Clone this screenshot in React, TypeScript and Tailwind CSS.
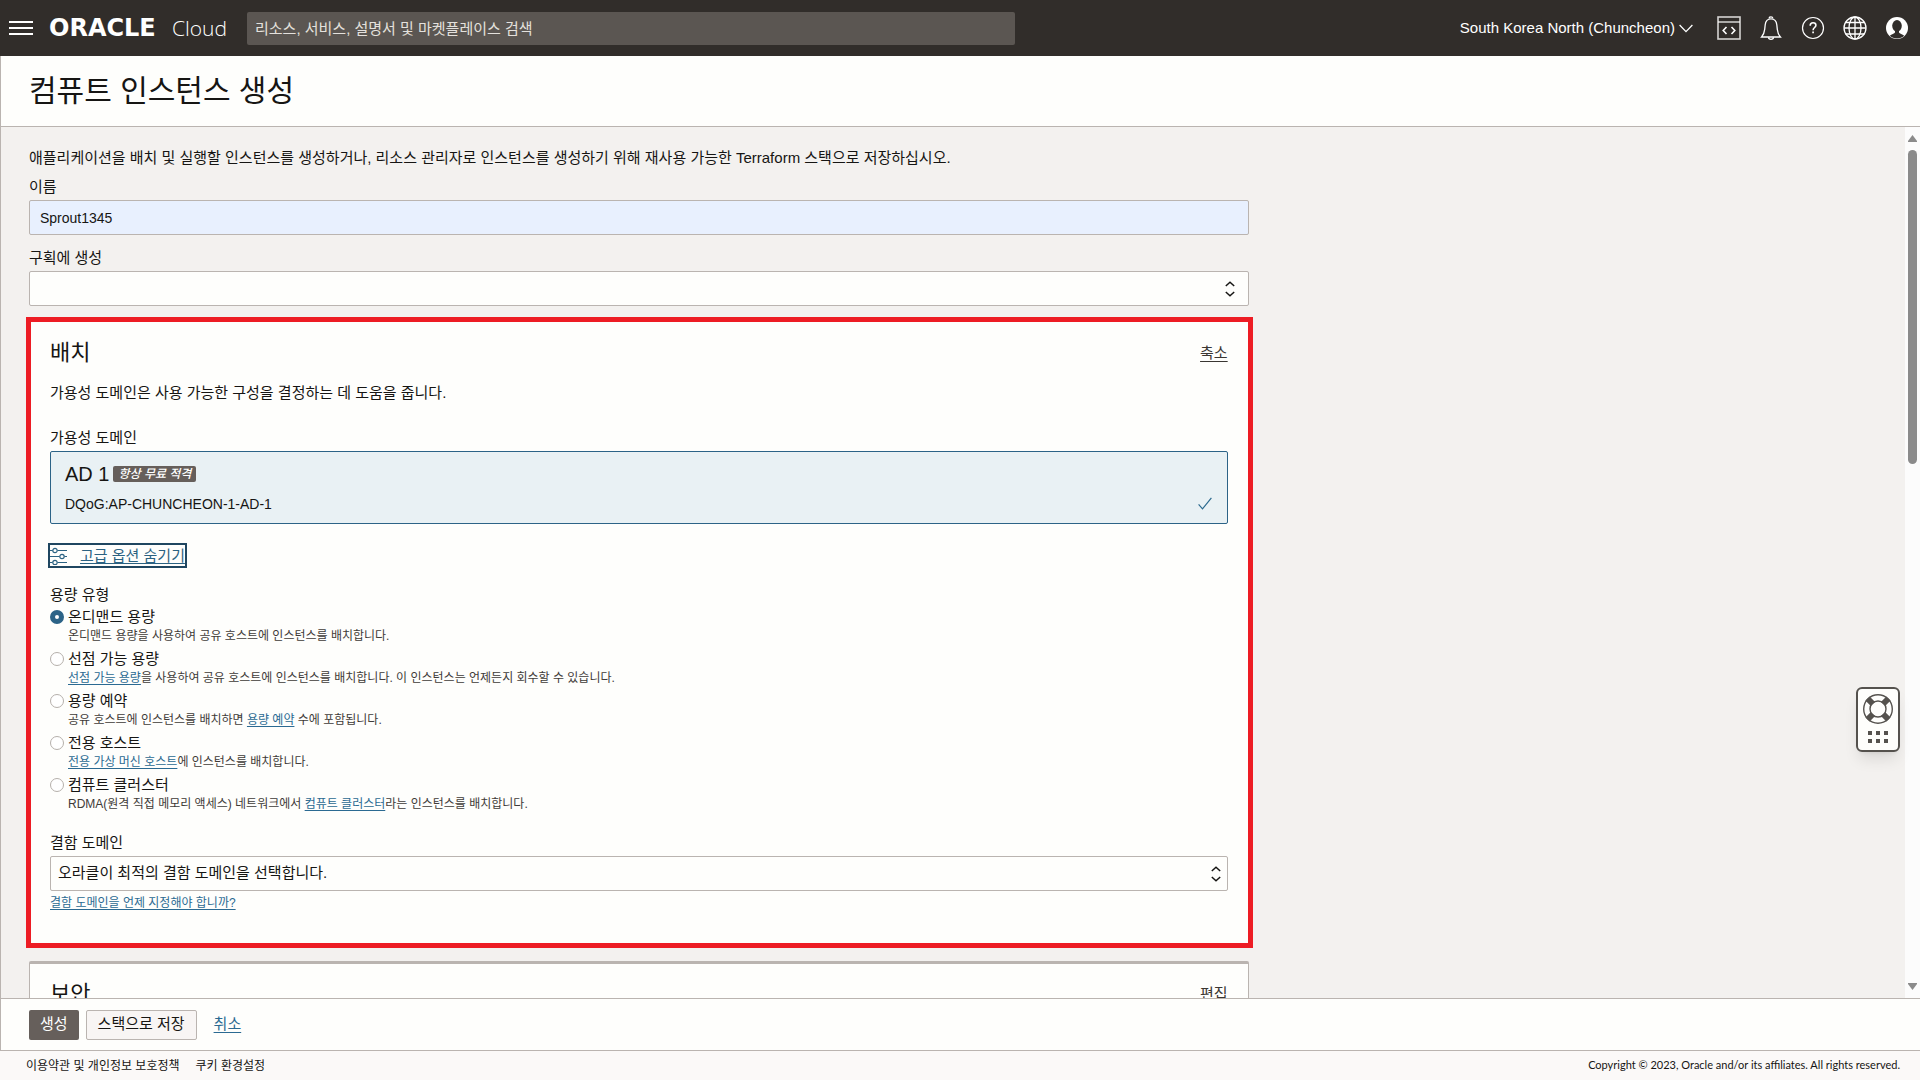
import React, { useState } from 'react'

type CapacityType = {
    id: string
    label: string
    before?: string
    link?: string
    after?: string
}

const capacityTypes: CapacityType[] = [
    { id: 'on-demand', label: '온디맨드 용량', before: '온디맨드 용량을 사용하여 공유 호스트에 인스턴스를 배치합니다.' },
    { id: 'preemptible', label: '선점 가능 용량', link: '선점 가능 용량', after: '을 사용하여 공유 호스트에 인스턴스를 배치합니다. 이 인스턴스는 언제든지 회수할 수 있습니다.' },
    { id: 'reservation', label: '용량 예약', before: '공유 호스트에 인스턴스를 배치하면 ', link: '용량 예약', after: ' 수에 포함됩니다.' },
    { id: 'dedicated', label: '전용 호스트', link: '전용 가상 머신 호스트', after: '에 인스턴스를 배치합니다.' },
    { id: 'cluster', label: '컴퓨트 클러스터', before: 'RDMA(원격 직접 메모리 액세스) 네트워크에서 ', link: '컴퓨트 클러스터', after: '라는 인스턴스를 배치합니다.' },
]

const MenuIcon = () => (
    <svg width="24" height="16" viewBox="0 0 24 16" fill="#fff">
        <path d="M0 1h24v2H0zM0 7h24v2H0zM0 13h24v2H0z" />
    </svg>
)

const CodeIcon = () => (
    <svg width="24" height="24" viewBox="0 0 24 24" fill="none" stroke="#d5d3d1" strokeWidth="1.6">
        <rect x="1" y="1" width="22" height="22" />
        <path d="M1 6h22" stroke="#fff" strokeWidth="1.2" />
        <path d="M9.5 11 6.2 14.5 9.5 18M14.5 11l3.3 3.5-3.3 3.5" stroke="#fff" />
    </svg>
)

const BellIcon = () => (
    <svg width="24" height="24" viewBox="0 0 24 24" fill="none" stroke="#fff" strokeWidth="1.3">
        <path d="M10.3 2.6V2a1.7 1.2 0 0 1 3.4 0v.6" />
        <path d="M2.6 21c2-2.2 2.7-4.4 3.1-7.6l.5-4.6C6.6 5 9 2.8 12 2.8s5.4 2.2 5.8 6l.5 4.6c.4 3.2 1.1 5.4 3.1 7.6z" />
        <path d="M9.5 21.300a2.500 2 0 0 0 5 0" />
    </svg>
)

const HelpIcon = () => (
    <svg width="24" height="24" viewBox="0 0 24 24" fill="none" stroke="#fff" strokeWidth="1.2">
        <circle cx="12" cy="12" r="10.5" />
        <path d="M9.2 9.7c0-1.8 1.2-2.9 2.9-2.900s2.800 1 2.800 2.500c0 2.200-2.800 2.300-2.800 4.900" strokeWidth="1.6" />
        <path d="M12.1 15.500v1.800" strokeWidth="1.7" />
    </svg>
)

const GlobeIcon = () => (
    <svg width="24" height="24" viewBox="0 0 24 24" fill="none" stroke="#fff" strokeWidth="1.3">
        <circle cx="12" cy="12" r="11" />
        <ellipse cx="12" cy="12" rx="6" ry="11" />
        <path d="M12 1v22M1 12h22M2.6 6.500h18.800M2.600 18h18.800" />
    </svg>
)

const UserIcon = () => (
    <svg width="24" height="24" viewBox="0 0 24 24">
        <circle cx="12" cy="12" r="11" fill="#fff" />
        <ellipse cx="12" cy="9.8" rx="4.8" ry="5.8" fill="#312d2a" />
        <path d="M10 14h4v2.500c.5 1.200 3.500 1.600 5.200 3.300C17.300 21.700 14.800 22.500 12 22.500S6.700 21.700 4.800 19.800C6.500 18.100 9.500 17.700 10 16.500z" fill="#312d2a" />
    </svg>
)

const ChevronDown = () => (
    <svg width="14" height="9" viewBox="0 0 14 9" fill="none" stroke="#fff" strokeWidth="1.3">
        <path d="m.6 1 6.400 6.600L13.400 1" />
    </svg>
)

const UpDownIcon = () => (
    <svg width="10" height="16" viewBox="0 0 10 16" fill="none" stroke="#161513" strokeWidth="1.5">
        <path d="M.8 5 5 1.300 9.200 5M.8 11 5 14.700 9.200 11" />
    </svg>
)

const CheckIcon = () => (
    <svg width="14" height="13" viewBox="0 0 14 13" fill="none" stroke="#2c6a8e" strokeWidth="1.2">
        <path d="M.6 7.400 4.500 11.800 13.400 .8" />
    </svg>
)

const SlidersIcon = () => (
    <svg width="18" height="18" viewBox="0 0 18 18" fill="none" stroke="#2b6282" strokeWidth="1.2">
        <path d="M0 3.500h2.500M7.500 3.500H17M0 9.500h9.500M14.500 9.500H17M0 15.500h2.500M7.500 15.500H17" />
        <circle cx="5" cy="3.5" r="2.2" />
        <circle cx="12" cy="9.5" r="2.2" />
        <circle cx="5" cy="15.5" r="2.2" />
    </svg>
)

const SupportIcon = () => (
    <svg width="32" height="52" viewBox="0 0 32 52" fill="none" stroke="#55524e">
        <path d="m5.500 5.500 5.500 5.500M26.500 5.500 21 11M5.500 26.500 11 21M26.500 26.500 21 21" strokeWidth="6" />
        <circle cx="16" cy="16" r="14.3" strokeWidth="1.4" />
        <circle cx="16" cy="16" r="8" strokeWidth="1.4" />
        <path d="M6 38h4v4H6zM14 38h4v4h-4zM22 38h4v4h-4zM6 46h4v4H6zM14 46h4v4h-4zM22 46h4v4h-4z" fill="#55524e" stroke="none" />
    </svg>
)

const Header = () => {
    return (
        <header className="flex h-14 shrink-0 items-center bg-[#312d2a] pr-[11px] pl-[9px] text-white">
            <button type="button" aria-label="메뉴">
                <MenuIcon />
            </button>
            <a href="#home" className="ml-4 flex w-[178px] shrink-0 items-center justify-between leading-7">
                <span className="font-['DejaVu_Sans'] text-2xl leading-7 font-bold">ORACLE</span>
                <span className="font-['Open_Sans'] text-[21px] font-light">Cloud</span>
            </a>
            <input
                type="search"
                aria-label="검색"
                placeholder="리소스, 서비스, 설명서 및 마켓플레이스 검색"
                className="ml-5 h-[33px] w-full max-w-3xl rounded-xs bg-[#5b5652] px-2 text-[15px] text-white placeholder:text-[#e4e1dd]"
            />
            <button type="button" className="ml-auto flex shrink-0 items-center gap-1 text-[15px]">
                South Korea North (Chuncheon)
                <ChevronDown />
            </button>
            <div className="ml-6 flex items-center gap-[18px]">
                <button type="button" aria-label="개발자 도구"><CodeIcon /></button>
                <button type="button" aria-label="알림"><BellIcon /></button>
                <button type="button" aria-label="도움말"><HelpIcon /></button>
                <button type="button" aria-label="언어"><GlobeIcon /></button>
                <button type="button" aria-label="프로파일"><UserIcon /></button>
            </div>
        </header>
    )
}

const Placement = () => {
    const [capacity, setCapacity] = useState('on-demand')

    return (
        <section className="mt-[11px] -mr-1 -ml-[3px] border-[5px] border-[#ed1c24] bg-[#fefefc] pt-[17px] pr-5 pb-[31px] pl-[19px]">
            {/* Title */}
            <div className="flex items-center justify-between">
                <h2 className="text-[22px] leading-7">배치</h2>
                <a href="#collapse" className="leading-5 text-[#3a3632] underline underline-offset-3">축소</a>
            </div>
            <p className="mt-4 leading-5">가용성 도메인은 사용 가능한 구성을 결정하는 데 도움을 줍니다.</p>

            {/* Availability domain */}
            <p className="mt-[25px] leading-5">가용성 도메인</p>
            <button
                type="button"
                aria-pressed="true"
                className="mt-[3px] flex w-full items-end justify-between rounded-xs border border-[#2c6387] bg-[#e9f1f4] px-[14px] py-2 text-left"
            >
                <span className="block">
                    <span className="flex items-center gap-1 text-xl leading-7">
                        AD 1
                        <span className="rounded-xs bg-[#665f5b] px-[5px] text-xs leading-4 font-medium text-white italic">항상 무료 적격</span>
                    </span>
                    <span className="mt-[5px] block text-sm leading-[22px]">DQoG:AP-CHUNCHEON-1-AD-1</span>
                </span>
                <span className="mr-px mb-[5px]">
                    <CheckIcon />
                </span>
            </button>

            {/* Advanced options */}
            <button
                type="button"
                className="mt-[19px] -ml-[2px] flex h-[25px] items-center gap-3 border-2 border-[#1f4660] text-[#2b6282]"
            >
                <SlidersIcon />
                <span className="leading-5 underline underline-offset-2">고급 옵션 숨기기</span>
            </button>

            {/* Capacity type */}
            <fieldset className="mt-[17px]">
                <legend className="leading-5">용량 유형</legend>
                {capacityTypes.map((type) => (
                    <div key={type.id} className="flex h-[42px] gap-1 pt-[2px]">
                        <input
                            type="radio"
                            id={type.id}
                            name="capacity"
                            checked={capacity === type.id}
                            onChange={() => setCapacity(type.id)}
                            className="mt-[3px] size-[14px] shrink-0 appearance-none rounded-full border border-[#b5b0ab] bg-white checked:border-5 checked:border-[#2c6387]"
                        />
                        <div>
                            <label htmlFor={type.id} className="block leading-5">{type.label}</label>
                            <p className="text-xs leading-[18px] text-[#3f3b38]">
                                {type.before}
                                {type.link && <a href={`#${type.id}`} className="text-[#2b6a92] underline underline-offset-2">{type.link}</a>}
                                {type.after}
                            </p>
                        </div>
                    </div>
                ))}
            </fieldset>

            {/* Fault domain */}
            <label htmlFor="fault-domain" className="mt-[18px] block leading-5">결함 도메인</label>
            <div className="relative mt-[3px]">
                <select id="fault-domain" className="block h-[35px] w-full appearance-none rounded-xs border border-[#bab4b0] bg-[#fefefc] px-[7px]">
                    <option>오라클이 최적의 결함 도메인을 선택합니다.</option>
                </select>
                <span className="pointer-events-none absolute inset-y-0 right-[7px] flex items-center">
                    <UpDownIcon />
                </span>
            </div>
            <a href="#fault" className="mt-[3px] block w-fit text-xs leading-[18px] text-[#2b6a92] underline underline-offset-2">
                결함 도메인을 언제 지정해야 합니까?
            </a>
        </section>
    )
}

const Scrollbar = () => (
    <div className="flex w-[15px] shrink-0 flex-col items-center bg-[#fcfcfc] py-2">
        <svg width="9" height="7" viewBox="0 0 9 7" fill="#8b8b8b"><path d="M4.500 0 9 6v1H0V6z" /></svg>
        <div className="my-2 w-[9px] flex-1">
            <div className="h-[38%] rounded-full bg-[#8b8b8b]" />
        </div>
        <svg width="9" height="7" viewBox="0 0 9 7" fill="#8b8b8b"><path d="M4.500 7 9 1V0H0v1z" /></svg>
    </div>
)

export default function App() {
    return (
        <div className="flex h-screen flex-col bg-[#fbf9f8] font-['Liberation_Sans','Noto_Sans_CJK_KR',sans-serif] text-[15px] text-[#161513]">
            <Header />

            <div className="flex min-h-0 flex-1 flex-col border-b border-l border-[#bab4b0]">
                <div className="flex h-[71px] shrink-0 items-center border-b border-[#bab4b0] bg-[#fefefc] px-7">
                    <h1 className="text-[30px] leading-9">컴퓨트 인스턴스 생성</h1>
                </div>

                <div className="flex min-h-0 flex-1">
                    <main className="flex-1 overflow-hidden bg-[#f3f1ef] px-7 pt-[21px]">
                        <div className="w-[66%]">
                            <p className="leading-5">
                                애플리케이션을 배치 및 실행할 인스턴스를 생성하거나, 리소스 관리자로 인스턴스를 생성하기 위해 재사용 가능한 Terraform 스택으로 저장하십시오.
                            </p>
                            <label htmlFor="name" className="mt-[9px] block leading-5">이름</label>
                            <input
                                id="name"
                                defaultValue="Sprout1345"
                                className="mt-[3px] block h-[35px] w-full rounded-xs border border-[#bab4b0] bg-[#e8f0fe] px-[10px] text-sm"
                            />
                            <label htmlFor="compartment" className="mt-[13px] block leading-5">구획에 생성</label>
                            <div className="relative mt-[3px]">
                                <select id="compartment" className="block h-[35px] w-full appearance-none rounded-xs border border-[#bab4b0] bg-[#fefefc]" />
                                <span className="pointer-events-none absolute inset-y-0 right-[14px] flex items-center">
                                    <UpDownIcon />
                                </span>
                            </div>

                            <Placement />

                            {/* Security */}
                            <section className="mt-[13px] rounded-xs border border-t-[3px] border-[#bab4b0] bg-[#fefefc] px-5 pt-4 pb-10">
                                <div className="flex items-center justify-between">
                                    <h2 className="text-[22px] leading-7">보안</h2>
                                    <a href="#edit" className="leading-5 text-[#3a3632] underline underline-offset-3">편집</a>
                                </div>
                            </section>
                        </div>
                    </main>
                    <Scrollbar />
                </div>

                {/* Actions */}
                <div className="flex h-[52px] shrink-0 items-center border-t border-[#bab4b0] bg-[#fefefc] px-7">
                    <button type="button" className="h-[30px] rounded-xs bg-[#665f5b] px-[11px] text-white">생성</button>
                    <button type="button" className="ml-[7px] h-[30px] rounded-xs border border-[#bab4b0] bg-[#f8f5f4] px-[11px]">스택으로 저장</button>
                    <a href="#cancel" className="ml-[17px] text-[#2b6a92] underline underline-offset-3">취소</a>
                </div>
            </div>

            <footer className="flex h-[29px] shrink-0 items-center justify-between pr-5 pl-[26px] text-xs">
                <nav className="flex gap-4">
                    <a href="#terms">이용약관 및 개인정보 보호정책</a>
                    <a href="#cookies">쿠키 환경설정</a>
                </nav>
                <p className="font-['Lato'] text-[11px]">Copyright © 2023, Oracle and/or its affiliates. All rights reserved.</p>
            </footer>

            <button
                type="button"
                aria-label="지원"
                className="fixed right-5 bottom-[328px] flex h-[65px] w-11 justify-center rounded-md border-2 border-[#55524e] bg-[#fefefc] pt-1 shadow-lg"
            >
                <SupportIcon />
            </button>
        </div>
    )
}
